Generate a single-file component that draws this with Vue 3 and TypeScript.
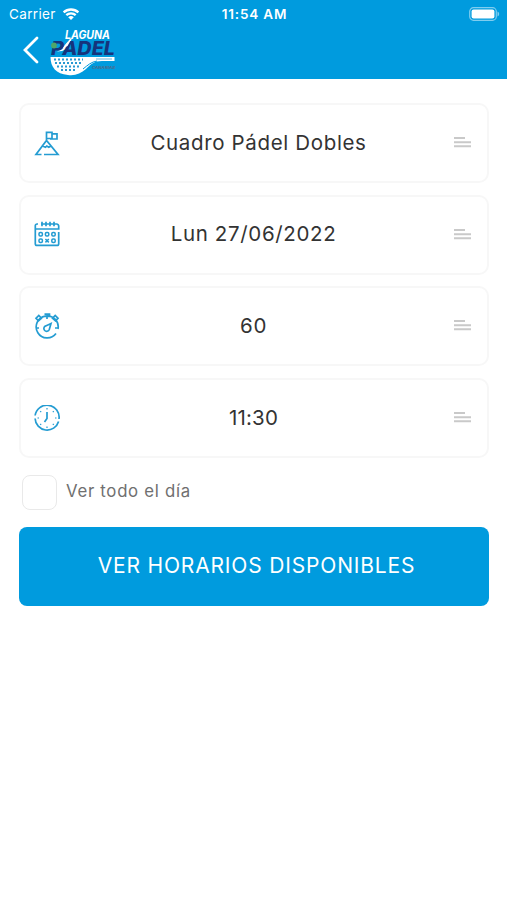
<script setup lang="ts">
type IconName = 'court' | 'calendar' | 'stopwatch' | 'clock'

interface Field {
  icon: IconName
  value: string
}

const fields: Field[] = [
  { icon: 'court', value: 'Cuadro Pádel Dobles' },
  { icon: 'calendar', value: 'Lun 27/06/2022' },
  { icon: 'stopwatch', value: '60' },
  { icon: 'clock', value: '11:30' },
]
</script>

<template>
  <div class="screen">
    <header class="header">
      <div class="status">
        <div class="carrier">
          <span>Carrier</span>
          <svg class="wifi" viewBox="0 0 20 15">
            <path d="M1.8 5.7a12 12 0 0 1 16.4 0M4.8 8.8a7.6 7.6 0 0 1 10.4 0" />
            <path class="solid" d="M6.9 11a4.6 4.6 0 0 1 6.2 0L10 14.2z" />
          </svg>
        </div>
        <span class="time">11:54 AM</span>
        <div class="battery-slot">
          <svg class="battery" viewBox="0 0 31 14">
            <rect class="shell" x=".7" y=".7" width="26.6" height="12.6" rx="3.8" />
            <rect class="charge" x="2.6" y="2.6" width="22.8" height="8.8" rx="2" />
            <path class="tip" d="M28.5 4.5c2.2.8 2.2 4.2 0 5z" />
          </svg>
        </div>
      </div>
      <div class="nav">
        <svg class="back" viewBox="0 0 18 28"><path d="M15 2 3 14l12 12" /></svg>
        <svg class="logo" viewBox="0 0 66 50">
          <path class="racket" d="M.5 29H64.500v4H52c-8 0-11 3-16 8-5 4.500-11 7-18 6C6 46 .5 39 .5 29z" />
          <path class="cutline" d="M33 41c5-4 8-7 14-8" />
          <path class="holes" d="M4 31.500h29M5 35h26M7 38.500h22M11 42h14" />
          <path class="swoosh" d="M20.500 10.500 11 21.500l-4 2 5-.5c5-2 8-6 9.500-12z" />
          <text class="laguna" x="15" y="10.500" textLength="45" lengthAdjust="spacingAndGlyphs">LAGUNA</text>
          <text class="padel" x="1" y="26.500" textLength="64" lengthAdjust="spacingAndGlyphs">PADEL</text>
          <path class="swoosh" d="m20 11.500 2-1.500-4.500 8-5 2.500z" />
          <circle class="ball" cx="4" cy="17.500" r="2.900" />
          <rect class="grip" x="46" y="30.500" width="16" height="1" />
          <text class="tag" x="42" y="41" textLength="23" lengthAdjust="spacingAndGlyphs">CANARIAS</text>
        </svg>
      </div>
    </header>

    <main class="form">
      <div v-for="field in fields" :key="field.icon" class="field" :class="`field-${field.icon}`">
        <svg v-if="field.icon === 'court'" class="icon" viewBox="0 0 26 26">
          <path d="M7.500 24.500H2L12.500 10.500 24 24.500H10M8.500 16l3 1.300 1.300-1.300 2 1.300 2.200-1.300M12.500 10.500V1.500M12.500 2.300h5.500v6.200h-5.500M18 3.800h5V9h-7" />
        </svg>
        <svg v-else-if="field.icon === 'calendar'" class="icon" viewBox="0 0 26 26">
          <path d="M4 3H3a1.700 1.700 0 0 0-1.700 1.700v18A1.700 1.700 0 0 0 3 24.400h20a1.700 1.700 0 0 0 1.700-1.700V11M7 3h15.500a2 2 0 0 1 2.200 2v3H1.300M8 .8v4.400M12 .8v4.400M16 .8v4.400M20 .8v4.400" />
          <g class="days">
            <rect x="5" y="11.600" width="3.400" height="3.400" rx="1.200" />
            <rect x="11.400" y="11.600" width="3.400" height="3.400" rx="1.200" />
            <rect x="17.800" y="11.600" width="3.400" height="3.400" rx="1.200" />
            <rect x="5" y="18" width="3.400" height="3.400" rx="1.200" />
            <path d="m11.400 18 3.400 3.400m0-3.400-3.400 3.400" />
            <rect x="17.800" y="18" width="3.400" height="3.400" rx="1.200" />
          </g>
        </svg>
        <svg v-else-if="field.icon === 'stopwatch'" class="icon" viewBox="0 0 26 26">
          <path d="M22 20.500A11 11 0 1 1 24 16M10.500 1.200h5v2.300h-5M13 3v3M2 15h3M21 15h3M4.500 7.800 2 5.300l2.800-2.800 2.700 2.700zM21.500 7.800 24 5.300l-2.800-2.800-2.700 2.700zM17 10.500l-1.700 6a2.800 2.800 0 1 1-3.600-3.600z" />
        </svg>
        <svg v-else class="icon" viewBox="0 0 26 26">
          <path d="M1.100 10.500A12 12 0 0 1 25 14M24.600 16.500A12 12 0 0 1 1.100 13.500" />
          <path d="M13 7v6.500L10.500 17" />
          <path class="ticks" d="M13 3v1.500M13 21.500V23M3.500 13H5M21 13h1.500M6.200 6.200l1 1M18.800 18.800l1 1M6.200 19.800l1-1M18.800 7.200l1-1" />
        </svg>
        <span class="value">{{ field.value }}</span>
        <svg class="lines" viewBox="0 0 17 11">
          <path d="M0 1h11M0 5.200h17M0 9.200h17" />
        </svg>
      </div>

      <label class="all-day">
        <input class="check" type="checkbox" />
        <span class="all-day-text">Ver todo el día</span>
      </label>

      <button class="submit" type="button">VER HORARIOS DISPONIBLES</button>
    </main>
  </div>
</template>

<style>
body {
  background: #fff;
}
</style>

<style scoped>
.screen {
  min-height: 900px;
  font-family: Inter, "Liberation Sans", sans-serif;
  background: #fff;
}
.header {
  box-sizing: border-box;
  height: 79px;
  color: #fff;
  background: #009bde;
}
.status {
  display: grid;
  grid-template-columns: 1fr auto 1fr;
  align-items: center;
  height: 27px;
  padding: 0 7px 0 9px;
  font-size: 13.500px;
}
.carrier {
  display: flex;
  align-items: center;
  gap: 6px;
  letter-spacing: 0.350px;
}
.wifi {
  width: 18px;
  height: 14px;
  fill: none;
  stroke: #fff;
  stroke-width: 2.600;
}
.wifi .solid {
  fill: #fff;
  stroke: none;
}
.time {
  font-size: 13.500px;
  font-weight: 600;
  letter-spacing: 0.850px;
}
.battery-slot {
  display: flex;
  justify-content: flex-end;
}
.battery {
  width: 31px;
  height: 14px;
}
.shell {
  fill: none;
  stroke: #80cdef;
  stroke-width: 1.200;
}
.charge {
  fill: #fff;
}
.tip {
  fill: #80cdef;
}
.nav {
  display: flex;
  align-items: flex-start;
  gap: 10px;
  padding-left: 22px;
}
.back {
  width: 18px;
  height: 28px;
  margin-top: 9px;
  fill: none;
  stroke: #fff;
  stroke-width: 2.800;
  stroke-linecap: round;
}
.logo {
  width: 66px;
  height: 50px;
  margin-top: 1px;
  font-style: italic;
  font-weight: 800;
}
.racket,
.swoosh {
  fill: #fff;
}
.cutline {
  fill: none;
  stroke: #009bde;
  stroke-width: 1;
}
.holes {
  fill: none;
  stroke: #2899d2;
  stroke-width: 2;
  stroke-dasharray: 2 2;
}
.laguna {
  font-size: 11.500px;
  font-weight: 700;
  fill: #fff;
}
.padel {
  font-size: 18.500px;
  fill: #15347c;
}
.ball {
  fill: #4fa56a;
}
.grip {
  fill: #69b8df;
}
.tag {
  font-size: 4px;
  fill: #466f91;
}
.form {
  padding: 24px 18px 0 19px;
}
.field {
  box-sizing: border-box;
  display: flex;
  align-items: center;
  height: 80px;
  margin-bottom: 11.700px;
  padding: 0 16px 1px 13px;
  border: 2px solid #f7f7f7;
  border-radius: 10px;
}
.icon {
  flex: none;
  width: 26px;
  height: 26px;
  fill: none;
  stroke: #249cd2;
  stroke-width: 1.700;
}
.days {
  stroke-width: 1.500;
}
.ticks {
  stroke-width: 1.200;
}
.value {
  flex: 1;
  padding-right: 7px;
  text-align: center;
  font-size: 20.500px;
  line-height: 28px;
  color: #333;
  letter-spacing: 0.650px;
}
.field-clock .value {
  letter-spacing: 0.200px;
}
.field-court .value {
  padding-right: 0;
  padding-left: 3px;
}
.lines {
  flex: none;
  width: 17px;
  height: 11px;
  fill: none;
  stroke: #c9c9c9;
  stroke-width: 1.900;
}
.all-day {
  display: flex;
  align-items: center;
  width: max-content;
  margin: 16.500px 0 17px 3px;
  gap: 9px;
}
.check {
  appearance: none;
  box-sizing: border-box;
  width: 35px;
  height: 35px;
  margin: 0;
  border: 1.500px solid #e9e9e9;
  border-radius: 8px;
  background: #fff;
}
.all-day-text {
  padding-bottom: 2px;
  font-size: 16.800px;
  letter-spacing: 0.700px;
  color: #707070;
}
.submit {
  display: block;
  width: 100%;
  height: 79px;
  padding: 0 0 2px 5px;
  border: 0;
  border-radius: 8px;
  font-family: inherit;
  font-size: 21px;
  letter-spacing: 0.830px;
  color: #fff;
  background: #009bde;
}
</style>
